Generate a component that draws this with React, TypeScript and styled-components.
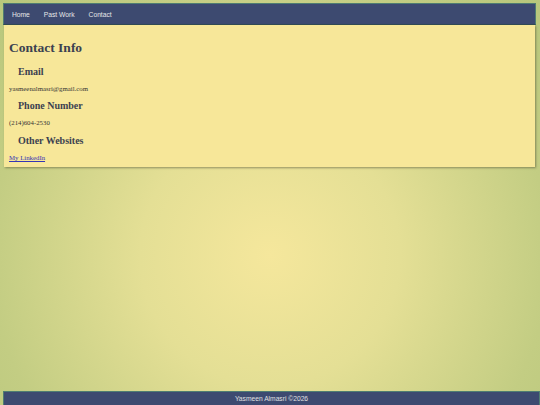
import React from "react";
import styled, { createGlobalStyle } from "styled-components";

const Global = createGlobalStyle`
  html, body {
    margin: 0;
    height: 100%;
  }
  body {
    padding: 3px 4px 0 3px;
    box-sizing: border-box;
    background: radial-gradient(circle at 50% 63%, #f5e79c 0%, #e4df95 35%, #c3cd83 75%, #b8c77c 100%);
    font-family: "Liberation Serif", serif;
  }
`;

const App = () => {
  return (
    <>
      <Global />
      <Nav>
        <NavLink href="#">Home</NavLink>
        <NavLink href="#">Past Work</NavLink>
        <NavLink href="#">Contact</NavLink>
      </Nav>
      <Main>
        <H1>Contact Info</H1>
        <H3>Email</H3>
        <P>yasmeenalmasri@gmail.com</P>
        <H3>Phone Number</H3>
        <P>(214)604-2530</P>
        <H3>Other Websites</H3>
        <P>
          <Link href="#">My LinkedIn</Link>
        </P>
      </Main>
      <Footer>Yasmeen Almasri ©2026</Footer>
    </>
  );
};

export default App;

const Nav = styled.nav`
  display: flex;
  align-items: center;
  height: 20px;
  padding: 0 8px;
  background-color: #3d4a70;
  border: 1px solid #4f7d72;
  border-bottom-color: #2f4a55;
`;

const NavLink = styled.a`
  font-family: "Liberation Sans", Arial, sans-serif;
  font-size: 6.7px;
  color: #e8e8e8;
  text-decoration: none;
  margin-right: 14px;
`;

const Main = styled.main`
  background-color: #f7e799;
  padding: 1px 5px 6px 5px;
  margin: 0 1px 0 1px;
  box-shadow: 1px 1px 2px rgba(90, 90, 60, 0.6);
`;

const H1 = styled.h1`
  font-size: 13.5px;
  color: #3b4150;
  margin: 14px 0 9.5px;
`;

const H3 = styled.h3`
  font-size: 10px;
  color: #3b4150;
  margin: 0 0 8.3px 9px;
`;

const P = styled.p`
  font-size: 6.8px;
  color: #333;
  margin: 0 0 8.3px;

  &:last-child {
    margin-bottom: 0;
  }
`;

const Link = styled.a`
  color: #3535b5;
`;

const Footer = styled.footer`
  position: fixed;
  left: 3px;
  right: 0;
  bottom: 0;
  height: 13px;
  display: flex;
  align-items: center;
  justify-content: center;
  background-color: #3d4a70;
  border: 1px solid #4f7d72;
  border-bottom: none;
  font-family: "Liberation Sans", Arial, sans-serif;
  font-size: 6.7px;
  color: #e0e0e0;
`;
